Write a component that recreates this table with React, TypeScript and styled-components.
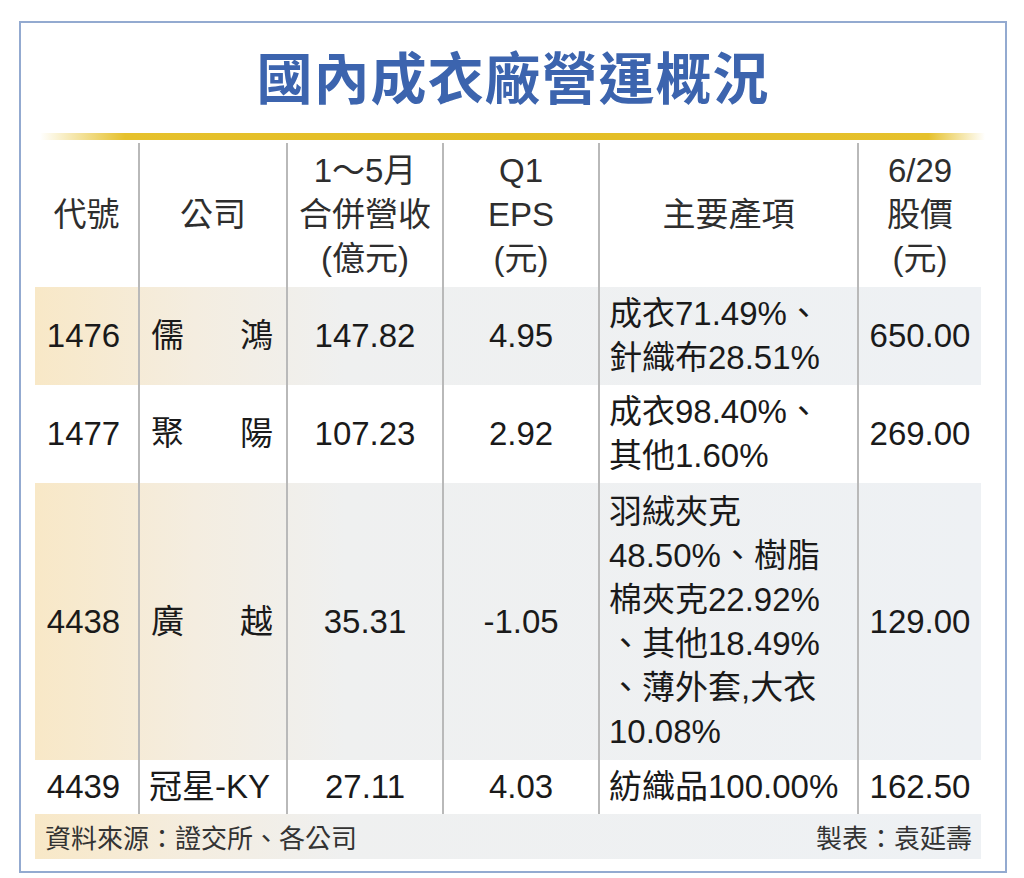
import React from 'react';
import styled, { createGlobalStyle } from 'styled-components';

const Global = createGlobalStyle`
  html, body { margin: 0; padding: 0; background: #ffffff; }
  body { font-family: "Liberation Sans", "Noto Sans CJK TC", sans-serif; }
`;

const Page = styled.div`
  padding: 21px 0 0 19px;
`;

const Frame = styled.div`
  box-sizing: border-box;
  width: 988px;
  height: 852px;
  border: 2px solid #93aad0;
  padding: 0 24px 0 14px;
  display: flex;
  flex-direction: column;
`;

const Title = styled.h1`
  margin: 0 -24px 0 -14px;
  padding-top: 20px;
  text-align: center;
  font-family: "Noto Sans CJK TC", sans-serif;
  font-size: 56px;
  font-weight: 700;
  line-height: 64px;
  letter-spacing: 1px;
  color: #3c64ae;
`;

const GoldLine = styled.div`
  margin: 26px -4px 0 5px;
  height: 7px;
  background: linear-gradient(
    90deg,
    rgba(230, 192, 40, 0) 0%,
    #e6c12c 9%,
    #e3bd24 50%,
    #e6c12c 94%,
    rgba(230, 192, 40, 0) 100%
  );
`;

const Table = styled.div`
  margin-top: 3px;
  display: flex;
  flex-direction: column;
`;

const Row = styled.div<{ $shaded?: boolean; $h?: number }>`
  display: grid;
  grid-template-columns: 103px 148px 156px 156px 259px 124px;
  height: ${(p) => (p.$h ? `${p.$h}px` : 'auto')};
  background: ${(p) =>
    p.$shaded
      ? 'linear-gradient(90deg, #f8e8c7 0px, #f4ede0 160px, #eff0f0 310px, #eef1f4 100%)'
      : '#ffffff'};
`;

type Align = 'center' | 'left' | 'spread' | 'code';

const Cell = styled.div<{ $align?: Align; $divider?: boolean; $head?: boolean }>`
  box-sizing: border-box;
  display: flex;
  align-items: center;
  justify-content: ${(p) =>
    p.$align === 'left' ? 'flex-start' : p.$align === 'spread' ? 'space-between' : 'center'};
  text-align: ${(p) => (p.$align === 'left' ? 'left' : 'center')};
  padding: ${(p) => (p.$head ? '6px 0' : '0')};
  padding-left: ${(p) => (p.$align === 'left' ? '9px' : p.$align === 'spread' ? '11px' : '0')};
  padding-right: ${(p) => (p.$align === 'spread' ? '13px' : p.$align === 'code' ? '6px' : '0')};
  border-left: ${(p) => (p.$divider ? '2px solid #b9b9b9' : 'none')};
  font-size: 33px;
  line-height: 44px;
  color: ${(p) => (p.$head ? '#2e2e2e' : '#1a1a1a')};
  white-space: nowrap;
`;

const Lines = styled.div`
  display: flex;
  flex-direction: column;
`;

const Footer = styled.div`
  display: flex;
  justify-content: space-between;
  align-items: center;
  height: 45px;
  padding: 0 9px 0 10px;
  font-size: 26px;
  color: #333333;
  background: linear-gradient(90deg, #f8e8c7 0px, #f4ede0 160px, #eff0f0 310px, #eef1f4 100%);
`;

type Item = {
  code: string;
  name: string[];
  revenue: string;
  eps: string;
  products: string[];
  price: string;
  shaded: boolean;
  height: number;
};

const rows: Item[] = [
  {
    code: '1476',
    name: ['儒', '鴻'],
    revenue: '147.82',
    eps: '4.95',
    products: ['成衣71.49%、', '針織布28.51%'],
    price: '650.00',
    shaded: true,
    height: 98,
  },
  {
    code: '1477',
    name: ['聚', '陽'],
    revenue: '107.23',
    eps: '2.92',
    products: ['成衣98.40%、', '其他1.60%'],
    price: '269.00',
    shaded: false,
    height: 98,
  },
  {
    code: '4438',
    name: ['廣', '越'],
    revenue: '35.31',
    eps: '-1.05',
    products: ['羽絨夾克', '48.50%、樹脂', '棉夾克22.92%', '、其他18.49%', '、薄外套,大衣', '10.08%'],
    price: '129.00',
    shaded: true,
    height: 277,
  },
  {
    code: '4439',
    name: ['冠星-KY'],
    revenue: '27.11',
    eps: '4.03',
    products: ['紡織品100.00%'],
    price: '162.50',
    shaded: false,
    height: 54,
  },
];

const header: string[][] = [
  ['代號'],
  ['公司'],
  ['1～5月', '合併營收', '(億元)'],
  ['Q1', 'EPS', '(元)'],
  ['主要產項'],
  ['6/29', '股價', '(元)'],
];

export default function App() {
  return (
    <Page>
      <Global />
      <Frame>
        <Title>國內成衣廠營運概況</Title>
        <GoldLine />
        <Table>
          <Row $h={144}>
            {header.map((h, i) => (
              <Cell key={i} $head $divider={i > 0}>
                <Lines>
                  {h.map((t) => (
                    <span key={t}>{t}</span>
                  ))}
                </Lines>
              </Cell>
            ))}
          </Row>
          {rows.map((r) => (
            <Row key={r.code} $shaded={r.shaded} $h={r.height}>
              <Cell $align="code">{r.code}</Cell>
              <Cell $divider $align={r.name.length > 1 ? 'spread' : 'left'}>
                {r.name.map((n) => (
                  <span key={n}>{n}</span>
                ))}
              </Cell>
              <Cell $divider>{r.revenue}</Cell>
              <Cell $divider>{r.eps}</Cell>
              <Cell $divider $align="left">
                <Lines>
                  {r.products.map((p) => (
                    <span key={p}>{p}</span>
                  ))}
                </Lines>
              </Cell>
              <Cell $divider>{r.price}</Cell>
            </Row>
          ))}
        </Table>
        <Footer>
          <span>資料來源：證交所、各公司</span>
          <span>製表：袁延壽</span>
        </Footer>
      </Frame>
    </Page>
  );
}
